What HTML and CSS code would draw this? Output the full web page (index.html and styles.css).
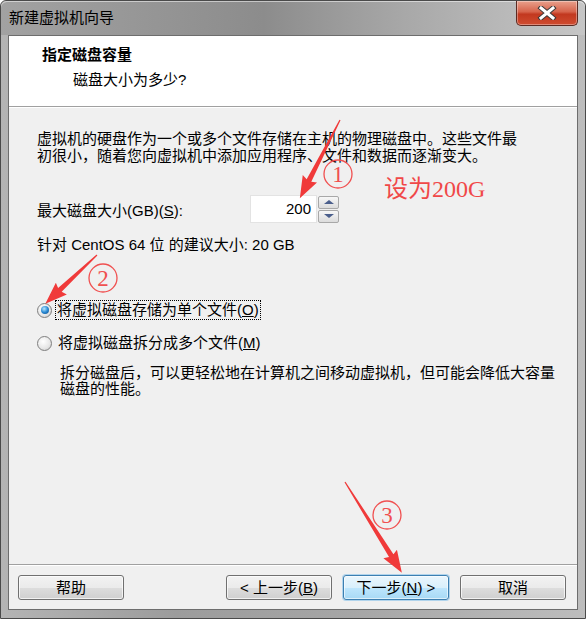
FILE: index.html
```html
<!DOCTYPE html>
<html lang="zh-CN">

<head>
  <meta charset="UTF-8" />
  <title>新建虚拟机向导</title>
  <link rel="stylesheet" href="styles.css">
</head>

<body>
  <div class="window">
    <div class="titlebar">
      <span class="title">新建虚拟机向导</span>
      <div class="close">
        <svg width="22" height="14" viewBox="0 0 22 14">
          <path d="M5 2 L17 12 M17 2 L5 12" stroke="#3a3a3a" stroke-width="5" stroke-linecap="square" />
          <path d="M5 2 L17 12 M17 2 L5 12" stroke="#ffffff" stroke-width="3" stroke-linecap="square" />
        </svg>
      </div>
    </div>

    <div class="client">
      <div class="header">
        <div class="header-title">指定磁盘容量</div>
        <div class="header-sub">磁盘大小为多少?</div>
      </div>

      <div class="body">
        <p class="intro">虚拟机的硬盘作为一个或多个文件存储在主机的物理磁盘中。这些文件最<br>初很小，随着您向虚拟机中添加应用程序、文件和数据而逐渐变大。</p>

        <div class="size-row">
          <span class="size-label">最大磁盘大小(GB)(<u>S</u>):</span>
          <div class="spin">
            <div class="spin-value">200</div>
            <div class="spin-btns">
              <span class="spin-btn"><span class="tri-up"></span></span>
              <span class="spin-btn"><span class="tri-down"></span></span>
            </div>
          </div>
        </div>

        <p class="hint">针对 CentOS 64 位 的建议大小: 20 GB</p>

        <div class="radio-row first">
          <span class="radio checked"></span>
          <span class="radio-label focused">将虚拟磁盘存储为单个文件(<u>O</u>)</span>
        </div>
        <div class="radio-row">
          <span class="radio"></span>
          <span class="radio-label">将虚拟磁盘拆分成多个文件(<u>M</u>)</span>
        </div>
        <p class="desc">拆分磁盘后，可以更轻松地在计算机之间移动虚拟机，但可能会降低大容量<br>磁盘的性能。</p>
      </div>

      <div class="footer">
        <button class="btn">帮助</button>
        <div class="nav">
          <button class="btn">&lt; 上一步(<u>B</u>)</button>
          <button class="btn default">下一步(<u>N</u>) &gt;</button>
          <button class="btn">取消</button>
        </div>
      </div>
    </div>

    <!-- red marks drawn over the dialog -->
    <svg class="marks" width="586" height="619" viewBox="0 0 586 619">
      <g fill="#f03a3a">
        <polygon transform="translate(340,120) rotate(117.15)" points="0,-0.6 68,-2.6 66,-8 88,0 66,8 68,2.6 0,0.6" />
        <polygon transform="translate(97,255) rotate(136.7)" points="0,-0.6 51,-2.6 49,-8 71,0 49,8 51,2.6 0,0.6" />
        <polygon transform="translate(345,482) rotate(57.9)" points="0,-0.6 87,-2.6 85,-8 107,0 85,8 87,2.6 0,0.6" />
      </g>
      <g fill="none" stroke="#f05050" stroke-width="1.3">
        <circle cx="338" cy="174" r="14" />
        <circle cx="103" cy="278" r="14" />
        <circle cx="387" cy="515" r="14" />
      </g>
      <g class="mark-num" fill="#f05050" text-anchor="middle">
        <text x="338" y="182">1</text>
        <text x="103" y="286">2</text>
        <text x="387" y="523">3</text>
      </g>
      <text class="mark-note" x="384" y="197">设为200G</text>
    </svg>
  </div>
</body>

</html>
```

FILE: styles.css
```css
body { margin: 0; padding: 0; background: #ffffff; font-family: "Liberation Sans", "Noto Sans CJK SC", sans-serif; font-size: 15px; color: #000; }
.window {
  position: relative;
  box-sizing: border-box;
  width: 586px;
  height: 619px;
  display: flex;
  flex-direction: column;
  padding: 0 7px 8px 7px;
  border: 1px solid #4a4a4a;
  border-radius: 6px 6px 0 0;
  background: linear-gradient(to right, #b4b4b4 0%, #9c9c9c 30%, #a6a6a6 60%, #bdbdbd 100%);
}
.titlebar {
  height: 34px;
  display: flex;
  justify-content: space-between;
  align-items: flex-start;
  background: linear-gradient(to right, #a2a2a2 0%, #8c8c8c 45%, #a9a9a9 70%, #c6c6c6 100%);
  margin: 0 -7px;
  padding: 0 7px;
  border-radius: 6px 6px 0 0;
  box-shadow: inset 0 1px rgba(255,255,255,0.5);
}
.title { align-self: center; line-height: 20px; margin-left: 1px; }
.close {
  width: 60px;
  height: 24px;
  display: flex;
  align-items: center;
  justify-content: center;
  border: 1px solid #5c2a22;
  border-top: none;
  border-radius: 0 0 5px 5px;
  background: linear-gradient(#e9a08c 0%, #d6634b 45%, #c2381f 55%, #cf4c30 100%);
  box-shadow: inset 0 0 0 1px rgba(255,255,255,0.35);
}

.client {
  flex: 1;
  display: flex;
  flex-direction: column;
  border: 1px solid #6d6d6d;
  background: #f0f0f0;
}
.header { height: 71px; box-sizing: border-box; background: #fff; border-bottom: 1px solid #a0a0a0; padding: 9px 0 0 33px; }
.header-title { font-weight: bold; line-height: 20px; }
.header-sub { line-height: 20px; margin-top: 5px; padding-left: 31px; }

.body { flex: 1; padding: 23px 0 0 28px; box-shadow: inset 0 1px #fff; }
.intro { margin: 0; line-height: 17px; }
.size-row { display: flex; align-items: center; margin-top: 31px; }
.size-label { width: 213px; }
.spin { display: flex; align-items: center; }
.spin-value {
  width: 60px;
  height: 26px;
  line-height: 26px;
  padding-right: 5px;
  text-align: right;
  background: #fff;
  border: 1px solid #e3e3e3;
}
.spin-btns { display: flex; flex-direction: column; gap: 1px; margin-left: 1px; }
.spin-btn {
  width: 19px;
  height: 11px;
  display: flex;
  align-items: center;
  justify-content: center;
  border: 1px solid #a8a8a8;
  border-radius: 2px;
  background: linear-gradient(#f7f7f7, #dcdcdc);
}
.tri-up { border: 4px solid transparent; border-top: none; border-bottom: 4px solid #4b5f8c; border-left-width: 5px; border-right-width: 5px; }
.tri-down { border: 4px solid transparent; border-bottom: none; border-top: 4px solid #4b5f8c; border-left-width: 5px; border-right-width: 5px; }
.hint { margin: 13px 0 0 0; line-height: 17px; }

.radio-row { display: flex; align-items: center; height: 20px; margin-top: 13px; }
.radio-row.first { margin-top: 47px; }
.radio {
  position: relative;
  width: 13px;
  height: 13px;
  border-radius: 50%;
  border: 1px solid #7f7f7f;
  background: radial-gradient(circle at 40% 35%, #ffffff 0%, #e6e6e6 60%, #c4c4c4 100%);
}
.radio.checked::after {
  content: "";
  position: absolute;
  left: 2.5px;
  top: 2.5px;
  width: 8px;
  height: 8px;
  border-radius: 50%;
  background: radial-gradient(circle at 40% 35%, #b8e8ff 0%, #2a8ad4 50%, #0b4680 100%);
}
.radio-label { margin-left: 4px; line-height: 18px; padding: 0 1px; border: 1px solid transparent; }
.radio-label.focused { border: 1px dotted #000; margin-left: 3px; }
.desc { margin: 12px 0 0 23px; line-height: 16px; }

.footer {
  height: 45px;
  box-sizing: border-box;
  border-top: 1px solid #a0a0a0;
  box-shadow: inset 0 1px #fff;
  display: flex;
  justify-content: space-between;
  padding: 10px 11px 0 9px;
}
.nav { display: flex; gap: 11px; }
.btn {
  width: 106px;
  height: 25px;
  padding: 0;
  font: inherit;
  line-height: 20px;
  color: #000;
  border: 1px solid #707070;
  border-radius: 3px;
  background: linear-gradient(#f2f2f2 0%, #ebebeb 50%, #dddddd 51%, #cfcfcf 100%);
  box-shadow: inset 0 0 0 1px rgba(255,255,255,0.7);
}
.btn.default {
  border-color: #3c7fb1;
  background: linear-gradient(#eaf6fd 0%, #d9f0fc 50%, #bee6fd 51%, #a7d9f5 100%);
  box-shadow: inset 0 0 0 1px rgba(255,255,255,0.6), 0 0 0 1px rgba(60,160,230,0.35);
}

.marks { position: absolute; left: -1px; top: -1px; pointer-events: none; }
.mark-num { font-family: "Liberation Serif", serif; font-size: 23px; }
.mark-note { font-family: "Liberation Serif", "Noto Sans CJK SC", serif; font-size: 24px; fill: #f04848; }
```
